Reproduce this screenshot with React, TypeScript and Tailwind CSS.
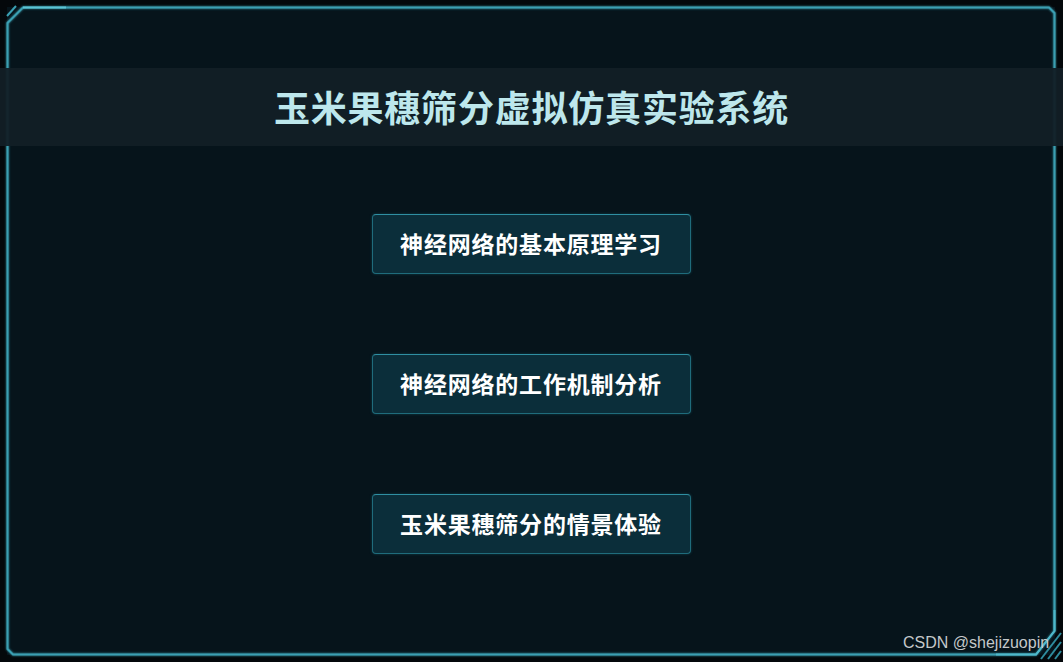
const menuItems = ['神经网络的基本原理学习', '神经网络的工作机制分析', '玉米果穗筛分的情景体验'];

const cjk = { fontFamily: '"Noto Sans CJK SC", "Noto Sans", sans-serif' };

function FrameLines() {
  return (
    <svg className="pointer-events-none absolute inset-0" width="1063" height="662" viewBox="0 0 1063 662">
      <defs>
        <filter id="glow" x="-10%" y="-10%" width="120%" height="120%">
          <feGaussianBlur stdDeviation="1" result="b" />
          <feMerge>
            <feMergeNode in="b" />
            <feMergeNode in="SourceGraphic" />
          </feMerge>
        </filter>
      </defs>
      <g fill="none" stroke="#3a9fb2" strokeWidth="2" filter="url(#glow)">
        <path d="M7.5 200 L7.5 23 L23 7.5 L1049 7.5 L1054.5 13 L1054.5 631 L1036 654.5 L13 654.5 L7.5 649 Z" />
      </g>
      {/* brighter highlight segments */}
      <path d="M23 7.5 L66 7.5" stroke="#5cc4d4" strokeWidth="2" />
      <path d="M1054.5 610 L1054.5 631 L1036 654.5 L996 654.5" stroke="#4fb8ca" strokeWidth="2" fill="none" />
      {/* corner stripes */}
      <path d="M7 16 L16 6" stroke="#3a9fb2" strokeWidth="2" />
      <path d="M1041 659 L1061 633" stroke="#2f8c9e" strokeWidth="2" />
      <path d="M1048 659 L1061 642" stroke="#2f8c9e" strokeWidth="2" />
      <path d="M1055 659 L1061 651" stroke="#2f8c9e" strokeWidth="2" />
    </svg>
  );
}

export default function App() {
  return (
    <div className="relative h-[662px] w-[1063px] overflow-hidden bg-[#04080b]">
      <div className="absolute left-[7px] top-[7px] h-[648px] w-[1048px] bg-[#06141b]" />
      <FrameLines />

      <div className="relative flex h-full flex-col pt-[68px]">
        {/* Title band */}
        <div className="flex h-[78px] items-center justify-center bg-[#121f26]/95 pb-[2px]">
          <h1 className="text-[36px] font-bold tracking-[0.8px] text-[#bde7ec]" style={cjk}>
            玉米果穗筛分虚拟仿真实验系统
          </h1>
        </div>

        {/* Menu */}
        <div className="mt-[68px] flex flex-col items-center gap-[80px] pr-[1px]">
          {menuItems.map((label) => (
            <button
              key={label}
              className="flex h-[60px] w-[319px] items-center justify-center rounded-[4px] border border-[#1f6c7c] border-t-[#2f8fa2] bg-[#0b2e3a] pb-[1px] text-[23px] font-bold tracking-[0.8px] text-white shadow-[0_0_3px_rgba(40,140,160,0.35)]"
              style={cjk}
            >
              {label}
            </button>
          ))}
        </div>
      </div>

      <div
        className="absolute left-[903px] top-[631px] text-[16px] text-[#c4c8ca]"
        style={{ fontFamily: '"Liberation Sans", Arial, sans-serif' }}
      >
        CSDN @shejizuopin
      </div>
    </div>
  );
}
